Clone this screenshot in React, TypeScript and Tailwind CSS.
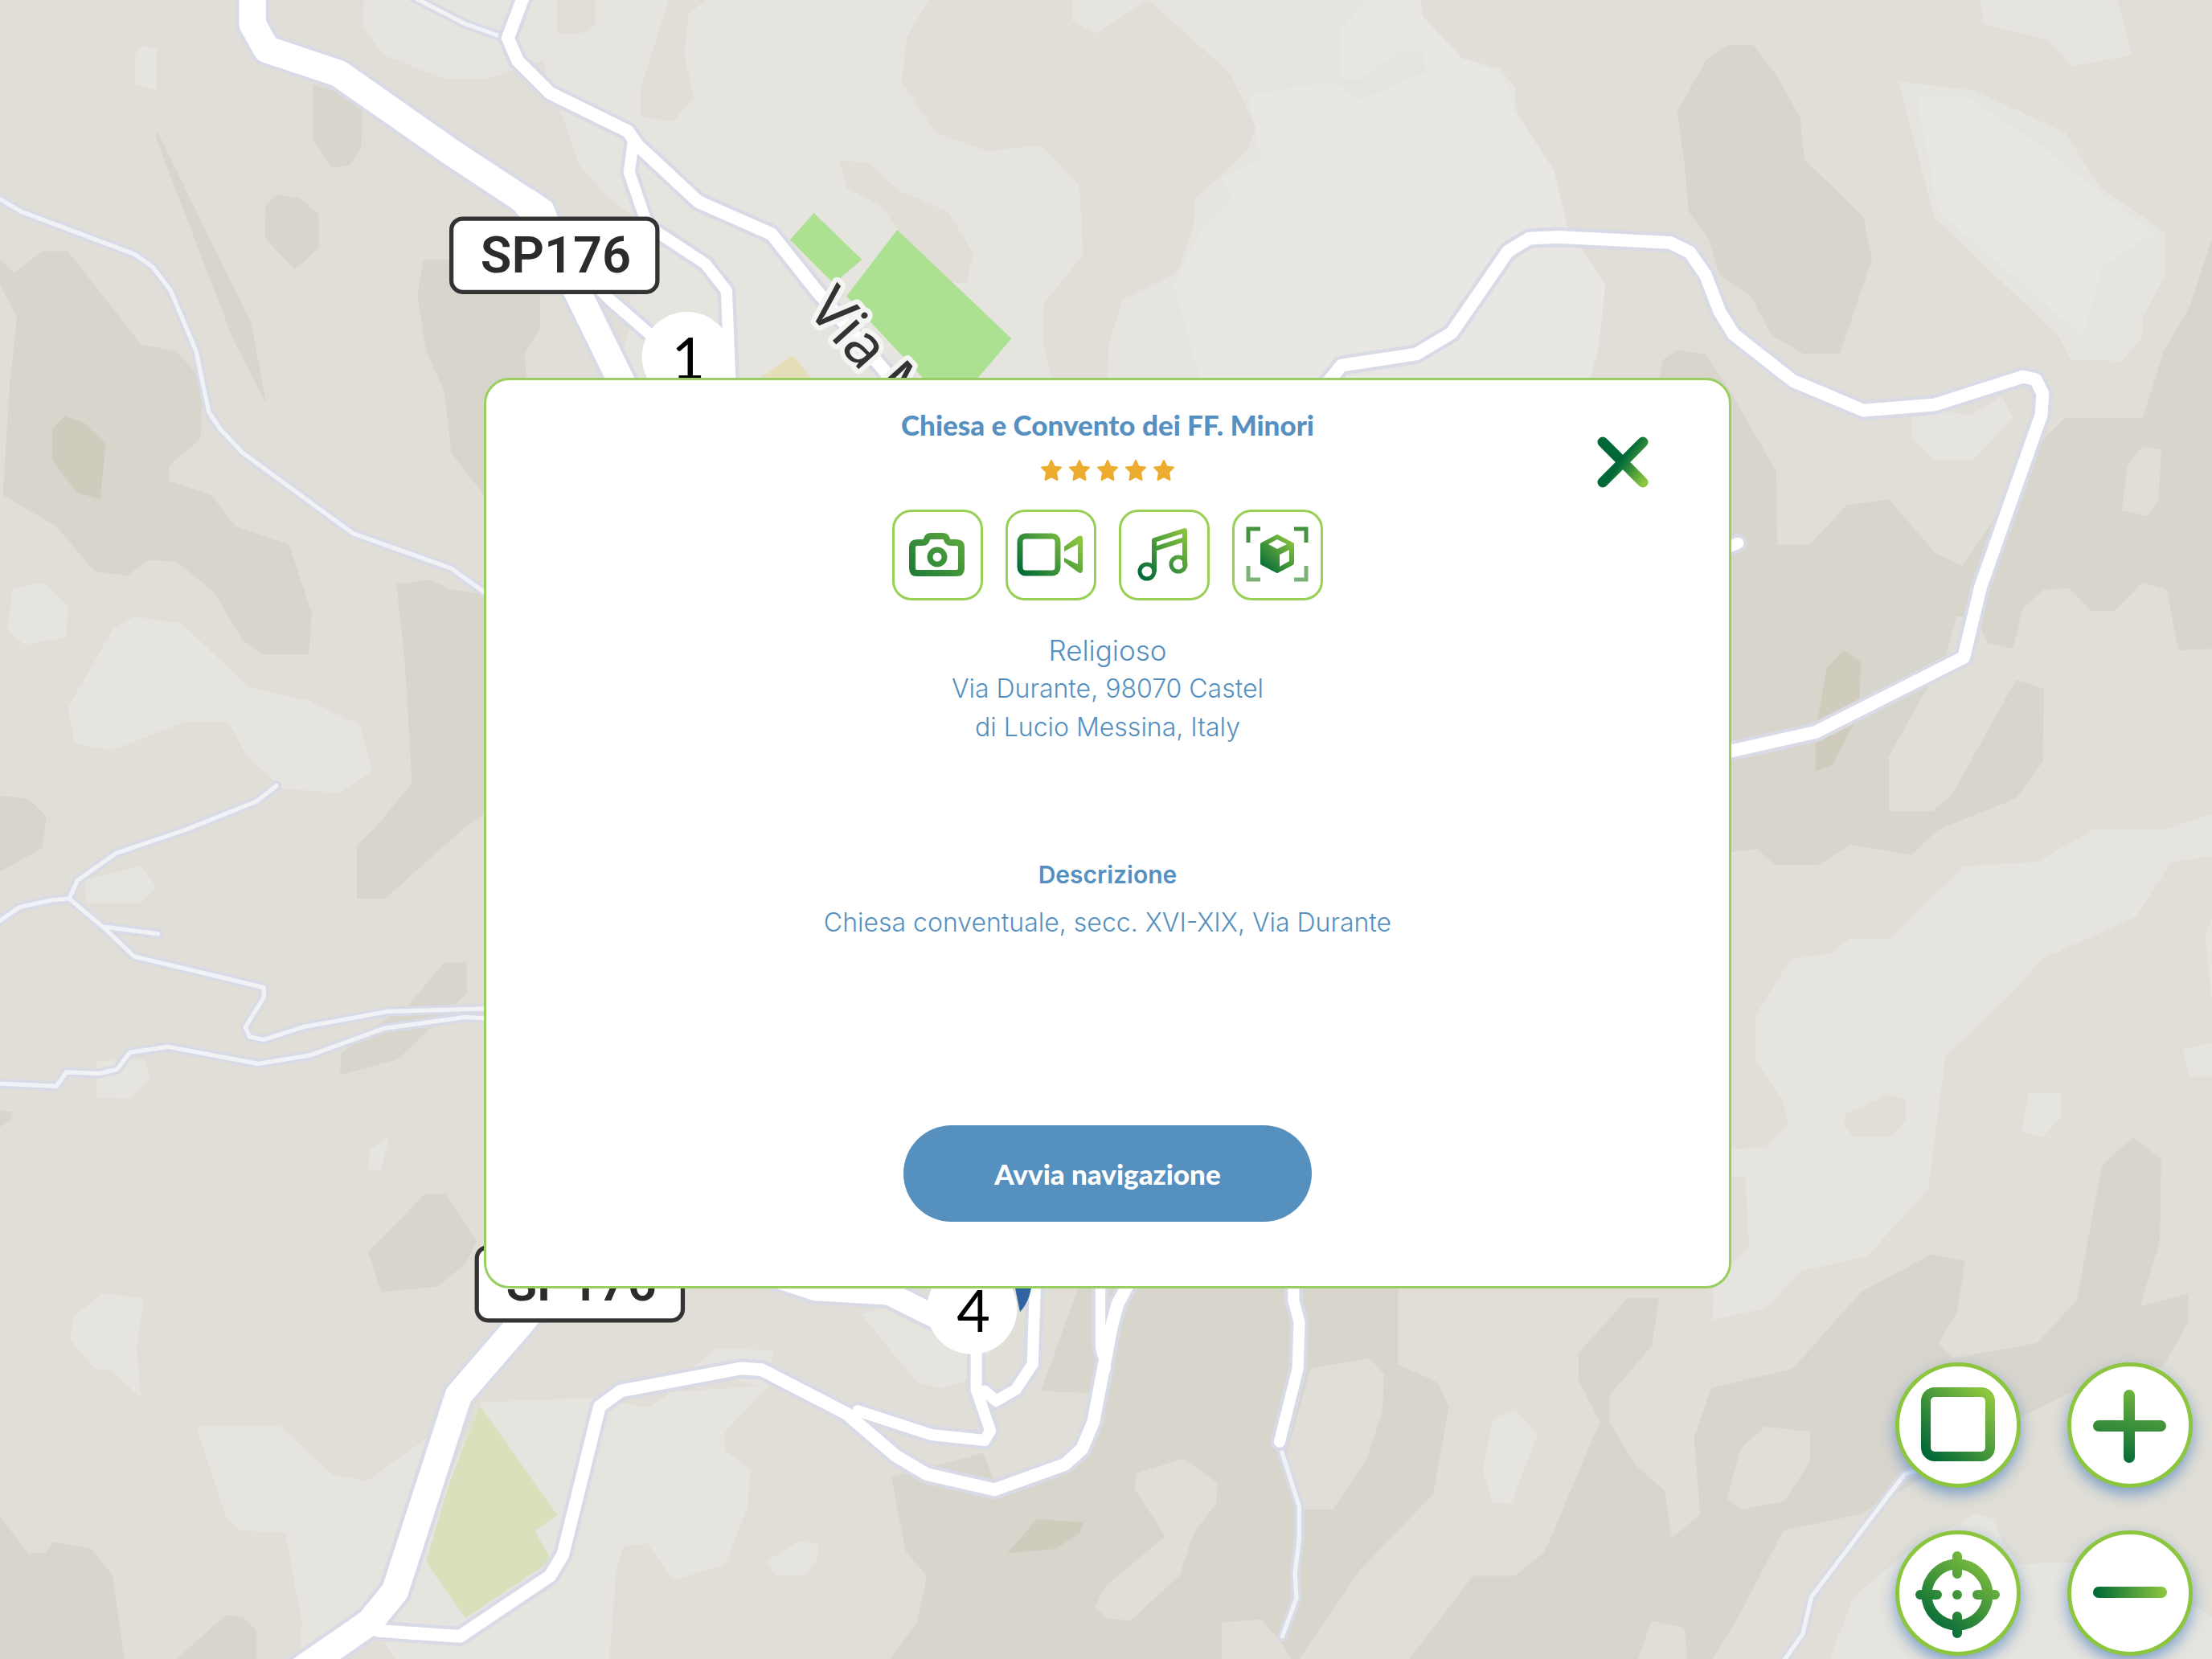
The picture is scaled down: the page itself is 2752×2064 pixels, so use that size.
import { ReactNode } from "react"

// Map geometry, in the 1568 x 1176 space of the map viewBox
const LAND = {
  base: "#e0ded6",
  dark: "#d8d5cd",
  light: "#e5e4df",
  lighter: "#e8e7e3",
  olive: "#cfccbd",
}

const terrain: [string, string][] = [
  // lighter ground, north
  [LAND.light, "258,0 257,19 272,39 315,56 345,56 385,43 388,56 400,86 410,116 430,139 450,154 466,190 447,210 447,232 430,280 1124,280 1133,247 1138,202 1111,161 1101,120 1075,79 1074,62 1064,49 1036,41 1008,11 1007,0"],
  [LAND.lighter, "969,0 1007,0 1008,11 1036,41 1060,50 1070,62 1073,79 1101,120 1111,161 1138,202 1133,247 1124,280 854,280 832,202 852,161 873,141 866,127 894,112 889,90 886,67 944,58 949,56 949,22"],
  [LAND.light, "949,56 965,56 991,37 1009,37 1011,51 964,71 944,58"],
  [LAND.base, "658,0 643,26 639,58 663,94 700,107 738,103 765,131 768,180 740,215 739,240 748,280 784,280 786,244 796,212 834,193 846,161 847,141 884,107 890,90 872,52 814,0"],
  [LAND.light, "760,0 814,0 784,19 778,24 760,15"],
  [LAND.base, "595,114 615,115 637,135 672,150 690,180 685,201 670,199 645,176 625,146 600,133"],
  [LAND.base, "474,0 454,64 454,82 462,84 477,86 492,70 485,38 488,10 500,0"],
  [LAND.base, "395,0 422,0 422,18 412,24 395,24"],
  // west
  [LAND.dark, "0,184 10,193 30,178 48,178 100,244 125,249 144,270 142,311 120,330 120,341 150,351 167,373 205,386 221,435 219,464 187,464 172,454 152,420 125,398 106,397 90,408 67,405 40,373 2,351 7,270 12,225 0,202"],
  [LAND.olive, "46,295 60,300 75,315 71,354 54,349 37,326 37,304"],
  [LAND.light, "95,437 129,442 176,487 220,497 255,514 264,547 240,562 200,559 175,536 162,512 130,512 79,532 53,527 48,502 80,446"],
  [LAND.light, "9,417 31,413 48,429 47,452 17,457 5,446"],
  [LAND.light, "102,32 111,35 111,64 96,60 96,38"],
  [LAND.dark, "222,60 257,70 256,105 248,117 235,119 222,99"],
  [LAND.dark, "196,138 212,140 226,152 226,176 209,191 188,169 188,146"],
  [LAND.dark, "111,92 178,229 189,287 165,240 111,99"],
  [LAND.dark, "300,184 383,184 383,232 372,251 374,280 350,280 350,360 320,321 315,277 302,249 296,210"],
  [LAND.dark, "281,414 305,411 320,418 350,422 350,572 328,588 273,637 253,637 253,599 265,588 292,555 287,469"],
  [LAND.dark, "0,564 20,566 33,579 30,601 0,618"],
  [LAND.light, "60,624 100,614 111,629 100,640 61,640"],
  [LAND.light, "68,752 102,751 107,764 92,779 68,778"],
  [LAND.dark, "0,787 9,788 8,794 0,799"],
  [LAND.dark, "315,682 331,682 331,704 282,751 241,762 242,747 260,732 290,712"],
  [LAND.light, "276,805 270,830 261,830 262,815"],
  [LAND.dark, "302,846 316,846 338,880 330,896 310,912 270,916 261,887"],
  [LAND.light, "72,917 102,920 97,956 100,991 80,972 67,970 50,950 52,933"],
  // south west
  [LAND.dark, "0,1075 20,1101 32,1101 38,1093 65,1098 80,1117 88,1176 0,1176"],
  [LAND.dark, "160,1145 172,1146 182,1156 182,1176 125,1176"],
  [LAND.light, "139,1011 199,1011 235,1045 260,1050 303,1019 320,1000 290,1120 255,1150 212,1176 214,1150 202,1086 170,1085 160,1075"],
  [LAND.light, "341,994 420,991 460,998 475,987 545,982 514,1015 514,1028 532,1042 530,1068 514,1109 477,1120 459,1094 442,1096 437,1113 432,1176 280,1176 270,1160"],
  [LAND.light, "507,956 548,957 545,985 492,969"],
  [LAND.light, "610,931 650,980 667,984 682,980 715,945 660,920"],
  [LAND.light, "565,1093 580,1094 579,1107 570,1117 550,1117 543,1107"],
  // south
  [LAND.dark, "767,905 991,905 991,967 1019,980 1027,997 1016,1059 964,1113 921,1176 631,1176 650,1150 657,1117 642,1100 632,1047 697,1030 705,1050 760,1040 775,1010 781,988 738,986"],
  [LAND.base, "929,970 971,963 981,974 980,1000 969,1034 945,1070 924,1070 912,1030"],
  [LAND.base, "806,1044 839,1034 863,1051 862,1066 846,1087 836,1117 801,1149 784,1147 776,1139 784,1124 826,1089 804,1055"],
  [LAND.base, "866,1150 894,1148 909,1165 915,1176 866,1176"],
  [LAND.olive, "735,1077 768,1079 765,1087 748,1098 714,1101"],
  // north east
  [LAND.dark, "1209,43 1224,32 1243,32 1259,53 1276,83 1279,113 1321,154 1327,184 1304,251 1279,251 1256,238 1241,210 1219,195 1211,169 1197,150 1194,116 1189,79"],
  [LAND.light, "1346,58 1399,64 1464,94 1489,133 1535,165 1535,195 1519,225 1518,240 1504,256 1468,255 1459,238 1371,154"],
  [LAND.lighter, "1359,69 1394,69 1444,101 1481,131 1526,165 1491,188 1476,238 1374,150"],
  [LAND.light, "1404,0 1406,17 1451,28 1469,47 1511,39 1501,0"],
  // east
  [LAND.dark, "1174,280 1179,255 1189,248 1209,251 1227,278 1259,334 1260,386 1283,386 1309,358 1339,354 1372,392 1391,401 1409,375 1449,311 1464,296 1519,296 1534,248 1552,218 1568,169 1568,460 1544,461 1536,418 1519,413 1499,433 1482,433 1467,417 1449,418 1434,431 1427,460 1409,456 1400,437 1387,437 1379,465 1339,536 1339,575 1370,575 1384,563 1429,482 1449,488 1448,540 1429,566 1374,588 1355,606 1312,599 1289,613 1258,613 1246,602 1220,605 1220,280"],
  [LAND.olive, "1307,461 1319,469 1318,506 1299,542 1287,547 1287,518 1295,473"],
  [LAND.light, "1355,294 1374,291 1397,294 1419,281 1427,296 1399,326 1372,326 1355,311"],
  [LAND.base, "1519,316 1532,319 1530,354 1523,366 1504,362 1508,330"],
  [LAND.light, "1220,815 1252,813 1268,796 1263,779 1244,751 1244,721 1269,680 1297,676 1312,665 1340,665 1392,614 1444,611 1484,588 1534,588 1568,577 1568,607 1539,611 1514,650 1447,680 1429,701 1379,749 1374,787 1367,843 1324,890 1277,901 1252,927 1214,936 1215,905 1228,896 1240,884 1237,834 1220,834"],
  [LAND.base, "1309,789 1339,776 1351,779 1351,794 1340,806 1314,806 1307,798"],
  [LAND.light, "1438,775 1461,775 1461,792 1448,806 1433,802"],
  [LAND.light, "1568,739 1547,744 1552,763 1568,763"],
  [LAND.light, "1568,650 1563,663 1568,712"],
  // south east
  [LAND.dark, "1369,889 1393,894 1387,931 1374,952 1384,963 1444,952 1472,922 1490,826 1512,806 1532,822 1531,880 1517,926 1551,917 1551,937 1534,968 1500,975 1468,987 1436,1003 1352,1054 1320,1073 1264,1085 1234,1143 1214,1176 999,1176 1044,1117 1074,1117 1095,1100 1134,1008 1119,978 1119,959 1154,920 1176,920 1171,954 1141,989 1141,1008 1159,1038 1180,1057 1185,1090 1205,1074 1201,1019 1213,984 1271,970 1319,916"],
  [LAND.base, "1251,1011 1283,1015 1283,1036 1265,1064 1234,1070 1224,1062 1234,1027"],
  [LAND.base, "1171,1149 1194,1154 1196,1176 1161,1176"],
  [LAND.light, "1074,999 1090,1017 1071,1066 1058,1065 1051,1042 1058,1006"],
  [LAND.light, "1297,1176 1314,1132 1352,1100 1381,1084 1400,1073 1413,1077 1420,1094 1432,1109 1459,1107 1500,1110 1530,1120 1568,1147 1568,1176"],
  // parks
  ["#ace191", "577,151 611,184 591,201 560,170"],
  ["#ace191", "636,163 717,240 688,274 660,274 600,210"],
  ["#e6deb9", "562,252 580,274 530,274"],
  ["#d9e0bc", "340,996 395,1074 379,1085 391,1106 330,1147 302,1107 318,1053"],
]

const paths = [
  "293,-2 330,17 358,27",
  "-2,140 15,150 95,180 108,189 121,206 139,249 148,292 156,304 172,321 250,378 320,403 345,421",
  "196,557 182,568 132,588 82,605 55,624 49,637 37,638 14,643 -2,654",
  "49,637 74,658 95,678 187,700 187,707 174,728 177,735 187,737 215,728 275,717 345,715",
  "74,657 112,662",
  "-2,768 40,770 47,760 70,761 83,758 92,746 119,742 183,754 220,748 272,729 330,721 345,722",
  "907,1024 921,1068 921,1090 918,1115 919,1133 909,1160",
  "1360,1042 1350,1045 1284,1132 1278,1158 1264,1178",
]

const roads: [number, string][] = [
  [8, "376,138 388,146 398,170 410,190 432,212 470,245"],
  [8, "449,100 446,122 459,160 500,187 515,206 518,280"],
  [9, "372,-5 360,27 367,43 390,66 445,93 452,103 495,143 547,166 578,205 650,290"],
  [9, "938,275 951,259 1004,251 1029,236 1069,178 1084,169 1104,168 1184,172 1198,179 1209,195 1219,221 1229,237 1271,270 1321,291 1371,287 1434,267 1443,269 1448,279 1447,294 1404,416 1392,466 1287,519 1220,534"],
  [8, "1220,390 1232,385"],
  [16, "530,898 578,914 630,917 672,938"],
  [8, "692,950 692,985 702,1014 698,1021 660,1017 608,1000"],
  [8, "734,905 732,967 720,985 706,993 698,986"],
  [7, "780,900 780,955 784,970"],
  [9, "268,1156 326,1160 390,1117 399,1102 425,997 440,986 525,970 540,971 600,1002 635,1032 657,1045 705,1056 755,1038 767,1027 775,1008 788,940 792,925 805,900"],
  [8, "917,900 917,922 921,937 920,970 907,1022"],
  [19, "179,-10 179,17 189,35 240,52 320,108 370,141 384,157 400,188 450,290"],
  [19, "410,885 370,937 325,989 280,1128 262,1150 210,1186"],
]

function Lines({ points, stroke, width }: { points: string; stroke: string; width: number }) {
  return (
    <polyline points={points} fill="none" stroke={stroke} strokeWidth={width} strokeLinecap="round" strokeLinejoin="round" />
  )
}

function RoadShield({ x, y }: { x: number; y: number }) {
  return (
    <g>
      <rect x={x + 1} y={y + 1} width="146" height="52" rx="8" fill="#fff" stroke="#333" strokeWidth="3" />
      <text x={x + 75} y={y + 39} textAnchor="middle" className="fill-[#2b2b2b] font-['Roboto',sans-serif] text-[36px] font-semibold">
        SP176
      </text>
    </g>
  )
}

function Pin({ x, y, label }: { x: number; y: number; label: string }) {
  return (
    <g>
      <circle cx={x} cy={y} r="32" fill="#fff" />
      <text x={x + 1} y={y + 16} textAnchor="middle" className="fill-black font-['Lato',sans-serif] text-[41px]">
        {label}
      </text>
    </g>
  )
}

function MapCanvas() {
  return (
    <svg
      className="absolute inset-0 size-full"
      viewBox="0 0 1568 1176"
      preserveAspectRatio="xMidYMid slice"
      role="img"
      aria-label="Mappa"
    >
      <rect width="1568" height="1176" fill={LAND.base} />
      {terrain.map(([fill, points]) => (
        <polygon key={points} fill={fill} points={points} />
      ))}
      {paths.map((points) => <Lines key={points} points={points} stroke="#d8dae6" width={7} />)}
      {paths.map((points) => <Lines key={points} points={points} stroke="#f1f2f6" width={3} />)}
      {roads.map(([width, points]) => <Lines key={points} points={points} stroke="#d8dae6" width={width + 5} />)}
      {roads.map(([width, points]) => <Lines key={points} points={points} stroke="#fff" width={width} />)}

      <text
        transform="translate(571 220) rotate(48)"
        className="fill-[#333] stroke-[#f4f4f2] stroke-[7px] font-['Noto_Sans',sans-serif] text-[42px] [paint-order:stroke] [stroke-linejoin:round]"
      >
        Via M
      </text>
      <RoadShield x={319} y={154} />
      <RoadShield x={337} y={883} />
      <path d="M718 905H732Q731 922 723 930Z" fill="#2f64a0" />
      <Pin x={487} y={253} label="1" />
      <Pin x={689} y={928} label="4" />
    </svg>
  )
}

type IconProps = {
  id: string
  size: string
  className: string
  // gradient line, from dark to light green
  from: [number, number]
  to: [number, number]
  children: ReactNode
}

function GreenIcon({ id, size, className, from, to, children }: IconProps) {
  return (
    <svg viewBox={size} className={className} fill="none" stroke={`url(#${id})`} strokeLinecap="round" strokeLinejoin="round" aria-hidden="true">
      <defs>
        <linearGradient id={id} gradientUnits="userSpaceOnUse" x1={from[0]} y1={from[1]} x2={to[0]} y2={to[1]}>
          <stop offset="0" stopColor="#006837" />
          <stop offset="1" stopColor="#8cc63f" />
        </linearGradient>
      </defs>
      {children}
    </svg>
  )
}

function MediaButton({ label, children }: { label: string; children: ReactNode }) {
  return (
    <button type="button" aria-label={label} className="size-[113px] rounded-3xl border-3 border-[#98cf55] bg-white">
      {children}
    </button>
  )
}

function MapButton({ label, children }: { label: string; children: ReactNode }) {
  return (
    <button
      type="button"
      aria-label={label}
      className="size-39 rounded-full border-5 border-[#8cc63f] bg-white shadow-[0_8px_18px_rgba(70,125,190,0.65)]"
    >
      {children}
    </button>
  )
}

const mediaIcon = { size: "3 3 107 107", className: "size-full" }
const mapIcon = { size: "5 5 146 146", className: "size-full" }

function MediaButtons() {
  return (
    <div className="mt-9 flex gap-7">
      <MediaButton label="Foto">
        <GreenIcon id="camera" {...mediaIcon} from={[0, 110]} to={[125, -10]}>
          <path d="M31 41H38Q42 41 43 37Q44 33 48 33H63Q67 33 68 37Q69 41 73 41H80Q86 41 86 47V73Q86 79 80 79H31Q25 79 25 73V47Q25 41 31 41Z" strokeWidth="8" />
          <circle cx="56" cy="59" r="9" strokeWidth="7" />
        </GreenIcon>
      </MediaButton>
      <MediaButton label="Video">
        <GreenIcon id="video" {...mediaIcon} from={[18, 80]} to={[80, 24]}>
          <rect x="18" y="33" width="47" height="46" rx="7" strokeWidth="7" />
          <path d="M73 46L89 34Q96 30 96 37V74Q96 82 89 77L73 65V60L90 68V43L73 52Z" fill="url(#video)" stroke="none" />
        </GreenIcon>
      </MediaButton>
      <MediaButton label="Audio">
        <GreenIcon id="music" {...mediaIcon} from={[28, 84]} to={[84, 26]}>
          <path d="M44 76V38L82 26V68M44 49L82 37" strokeWidth="6" />
          <circle cx="35" cy="77" r="9" strokeWidth="5" />
          <circle cx="74" cy="68" r="9" strokeWidth="5" />
        </GreenIcon>
      </MediaButton>
      <MediaButton label="Modello 3D">
        <GreenIcon id="cube" {...mediaIcon} from={[38, 76]} to={[76, 36]}>
          <g stroke="#46933f" strokeWidth="5" strokeLinecap="butt" strokeLinejoin="miter">
            <path d="M20 41V24H35M77 24H92V41" />
            <path d="M20 70V87H35M77 87H92V70" stroke="#7db37a" />
          </g>
          <path d="M56 33L75 43V67L56 77L37 67V43Z" fill="url(#cube)" strokeWidth="4" />
          <path d="M45 43L56 37L68 43L56 49Z M59 56L71 50V64L59 71Z" fill="#fff" stroke="none" />
        </GreenIcon>
      </MediaButton>
    </div>
  )
}

function MapControls() {
  return (
    <div className="absolute right-6 bottom-1 grid grid-cols-2 gap-x-[58px] gap-y-[53px]">
      <MapButton label="Schermo intero">
        <GreenIcon id="frame" {...mapIcon} from={[40, 115]} to={[115, 40]}>
          <rect x="38" y="37" width="80" height="80" rx="11" strokeWidth="12" />
        </GreenIcon>
      </MapButton>
      <MapButton label="Ingrandisci">
        <GreenIcon id="plus" {...mapIcon} from={[72, 130]} to={[90, 10]}>
          <path d="M77 41V118M39 79H116" strokeWidth="14" />
        </GreenIcon>
      </MapButton>
      <MapButton label="La mia posizione">
        <GreenIcon id="target" {...mapIcon} from={[48, 125]} to={[115, 30]}>
          <circle cx="77" cy="80" r="38" strokeWidth="13" />
          <path d="M77 32V54M77 107V128M31 80H52M102 80H124" strokeWidth="12" />
          <circle cx="77" cy="80" r="6" fill="url(#target)" stroke="none" />
        </GreenIcon>
      </MapButton>
      <MapButton label="Riduci">
        <GreenIcon id="minus" {...mapIcon} from={[34, 77]} to={[122, 77]}>
          <path d="M39 77H117" strokeWidth="14" />
        </GreenIcon>
      </MapButton>
    </div>
  )
}

function Stars() {
  return (
    <div className="mt-6 flex gap-[9px]" role="img" aria-label="5 stelle su 5">
      {[1, 2, 3, 4, 5].map((n) => (
        <svg key={n} viewBox="0 0 26 26" className="size-[26px] fill-[#ecac30] stroke-[#ecac30]" strokeWidth="2" strokeLinejoin="round">
          <path d="M13 1L16.500 8.500L25 9.500L19 15.500L20.500 25L13 21L5.500 25L7 15.500L1 9.500L9.500 8.500Z" />
        </svg>
      ))}
    </div>
  )
}

export default function App() {
  return (
    <div className="relative flex min-h-screen items-center justify-center overflow-hidden pt-2 pl-1">
      <MapCanvas />

      <section
        role="dialog"
        aria-labelledby="place-name"
        className="relative flex w-[56.5%] flex-col items-center rounded-[32px] border-3 border-[#98cf60] bg-white px-8 pt-[35px] pb-20 font-['Inter',sans-serif] text-[32px] leading-12 font-light text-[#5590c0]"
      >
        <h1 id="place-name" className="font-['Lato',sans-serif] text-[35px] leading-10 font-black">
          Chiesa e Convento dei FF. Minori
        </h1>
        <Stars />
        <MediaButtons />

        <p className="mt-[38px] text-[35px]">Religioso</p>
        <address className="text-center not-italic">
          Via Durante, 98070 Castel
          <br />
          di Lucio Messina, Italy
        </address>

        <h2 className="mt-[135px] text-[30px] font-semibold">Descrizione</h2>
        <p className="mt-3">Chiesa conventuale, secc. XVI-XIX, Via Durante</p>

        <button
          type="button"
          className="mt-57 h-30 w-[508px] rounded-full bg-[#5590be] font-['Lato',sans-serif] text-[35px] font-black text-white"
        >
          Avvia navigazione
        </button>

        <button type="button" aria-label="Chiudi" className="absolute top-[70px] right-[100px] size-16">
          <GreenIcon id="close" size="0 0 64 64" className="size-full" from={[30, 30]} to={[62, 52]}>
            <path d="M7 7L57 57M57 7L7 57" strokeWidth="13" />
          </GreenIcon>
        </button>
      </section>

      <MapControls />
    </div>
  )
}
